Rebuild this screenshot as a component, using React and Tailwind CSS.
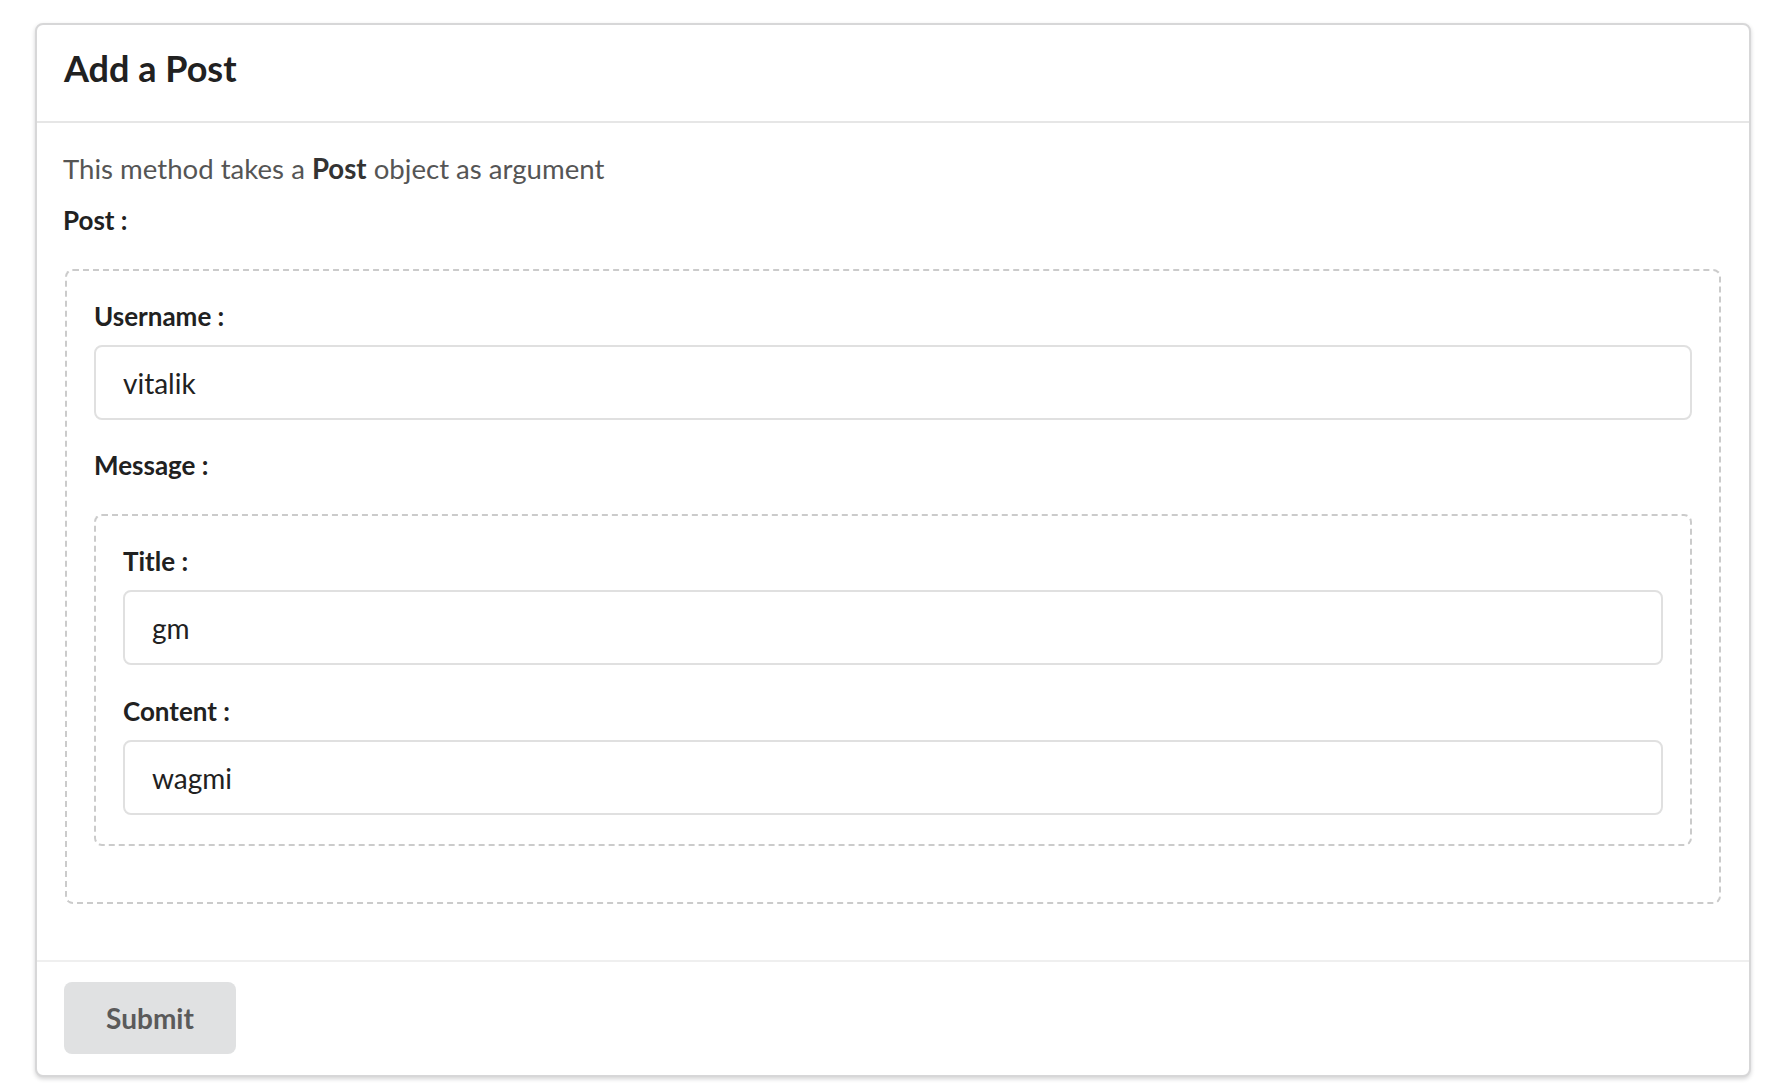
import { useState } from 'react'

function Label({ children, className = '' }) {
  return (
    <div className={`text-[26px] leading-[36px] font-bold text-[#212121] ${className}`}>{children}</div>
  )
}

function TextField({ label, value, onChange, className = '' }) {
  return (
    <div className={className}>
      <Label className="mb-[11px]">{label}</Label>
      <input
        value={value}
        onChange={(e) => onChange(e.target.value)}
        className="block w-full h-[75px] px-[27px] border-2 border-[#e0e0e0] rounded-[8px] bg-white text-[28px] text-[#212121] outline-none"
      />
    </div>
  )
}

export default function App() {
  const [username, setUsername] = useState('vitalik')
  const [title, setTitle] = useState('gm')
  const [content, setContent] = useState('wagmi')

  return (
    <main className="min-h-screen bg-white pl-[35px] pr-[19px] pt-[23px] pb-[15px] font-[family-name:Lato,sans-serif]">
      <div className="border-2 border-[#d7d7d8] rounded-[8px] bg-white shadow-[0_2px_4px_0_#d4d4d5]">
        <div className="px-[27px] pt-[20px] pb-[30px] border-b-2 border-[#e6e6e6]">
          <h1 className="text-[36px] leading-[46px] font-bold text-[#212121]">Add a Post</h1>
        </div>

        <div className="pl-[26px] pr-[28px] pt-[26px] pb-[56px]">
          <p className="text-[27.6px] leading-[40px] text-[#555]">
            This method takes a <b className="text-[#333]">Post</b> object as argument
          </p>
          <Label className="mt-[13px]">Post :</Label>

          <div className="ml-[2px] mt-[31px] border-2 border-dashed border-[#cbcbcb] rounded-[8px] p-[27px]">
            <TextField label="Username :" value={username} onChange={setUsername} className="mb-[27px]" />

            <div className="mb-[29px]">
              <Label className="mb-[31px]">Message :</Label>
              <div className="border-2 border-dashed border-[#cbcbcb] rounded-[8px] px-[27px] pt-[27px] pb-[29px]">
                <TextField label="Title :" value={title} onChange={setTitle} className="mb-[28px]" />
                <TextField label="Content :" value={content} onChange={setContent} />
              </div>
            </div>
          </div>
        </div>

        <div className="border-t-2 border-[#efefef] px-[27px] pt-[20px] pb-[21px]">
          <button className="w-[172px] h-[72px] rounded-[8px] bg-[#e0e1e2] text-[28px] font-bold text-[#5a5a5a]">
            Submit
          </button>
        </div>
      </div>
    </main>
  )
}
